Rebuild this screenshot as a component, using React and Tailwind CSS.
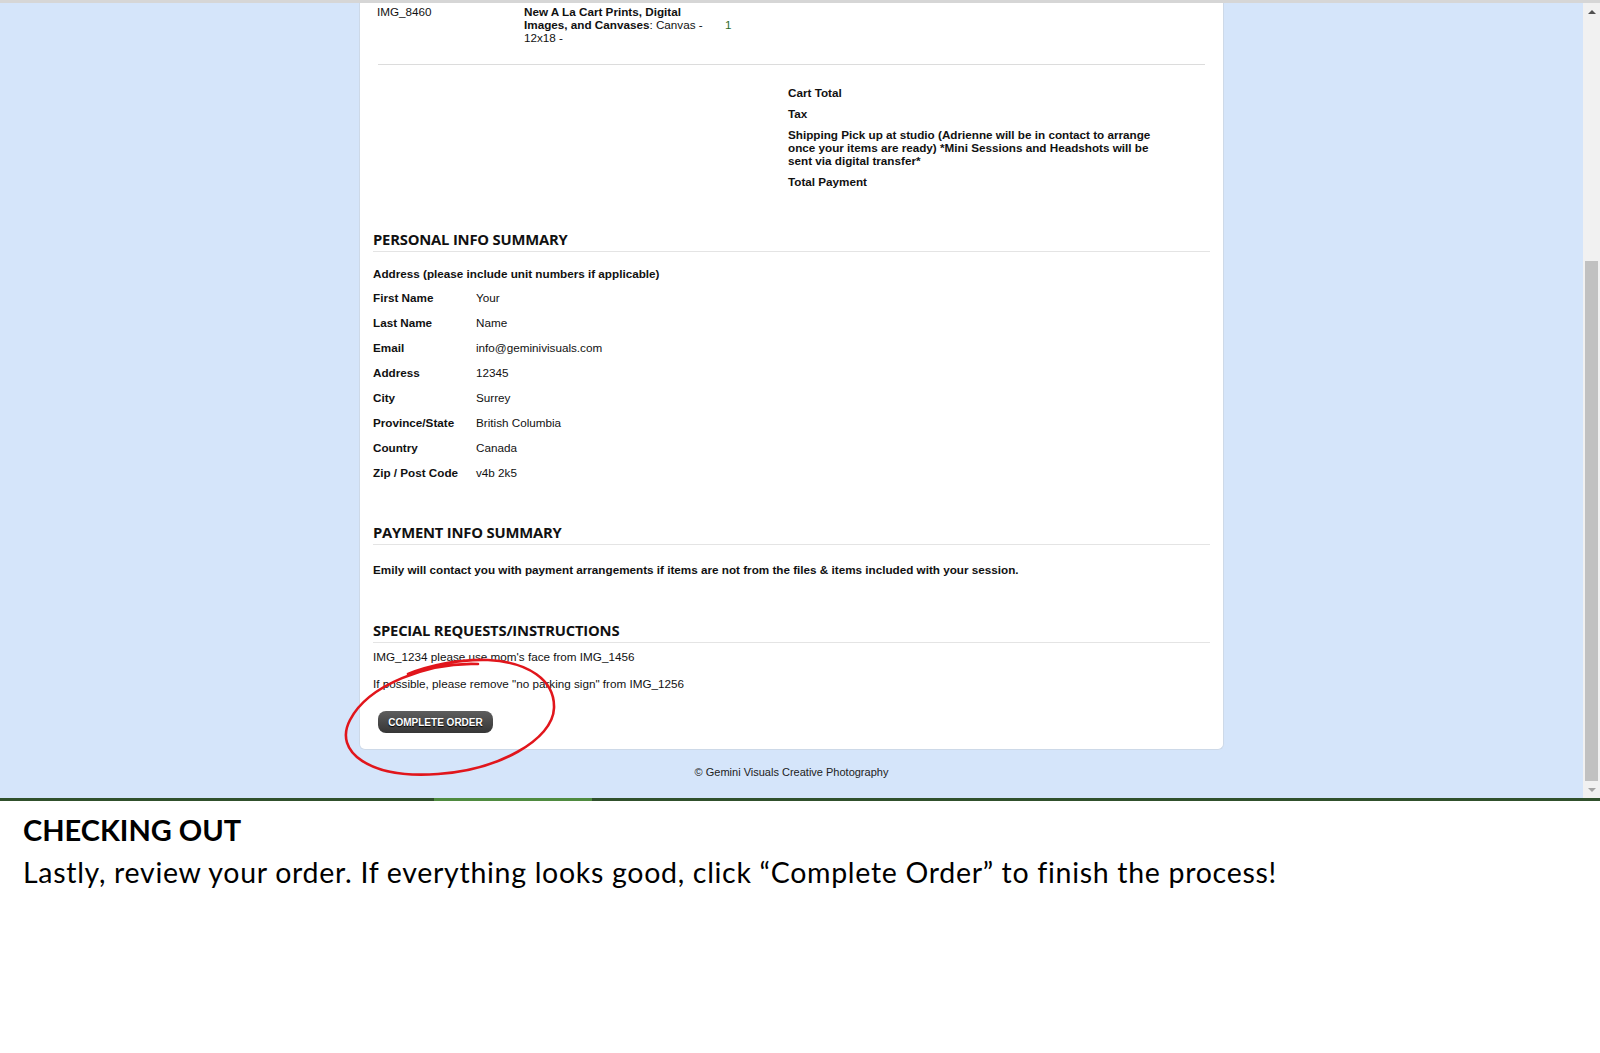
import React from 'react'

const info = [
    ['First Name', 'Your'],
    ['Last Name', 'Name'],
    ['Email', 'info@geminivisuals.com'],
    ['Address', '12345'],
    ['City', 'Surrey'],
    ['Province/State', 'British Columbia'],
    ['Country', 'Canada'],
    ['Zip / Post Code', 'v4b 2k5'],
]

const SectionTitle = ({ children }) => (
    <div className="border-b border-[#e4e4e4] pb-[3px] text-[14.8px] font-bold leading-[18px] tracking-[-0.2px] text-[#111]" style={{ fontFamily: '"Open Sans", sans-serif' }}>
        {children}
    </div>
)

const Scrollbar = () => (
    <div className="flex w-[17px] flex-col bg-[#f1f1f1]">
        <div className="flex h-[17px] items-center justify-center">
            <div className="h-0 w-0 border-x-[4px] border-b-[4px] border-x-transparent border-b-[#505050]" />
        </div>
        <div className="h-[241px]" />
        <div className="mx-[2px] flex-1 bg-[#c1c1c1]" />
        <div className="flex h-[17px] items-center justify-center">
            <div className="h-0 w-0 border-x-[4px] border-t-[4px] border-x-transparent border-t-[#a3a3a3]" />
        </div>
    </div>
)

export default function App() {
    return (
        <div className="h-[1053px] w-[1600px] overflow-hidden bg-white">
            {/* browser viewport */}
            <div className="relative flex h-[798px] border-t-[3px] border-[#d6d6d6]">
                <div className="flex-1 bg-[#d5e5fa]" style={{ fontFamily: '"Liberation Sans", Arial, sans-serif' }}>
                    <div className="mx-auto w-[865px] rounded-b-[6px] border-x border-b border-[#cdd9e8] bg-white px-[13px] pb-[16px] text-[11.7px] text-[#111]">
                        {/* order row */}
                        <div className="flex px-[4px] pt-[2px] leading-[13px]">
                            <div className="w-[147px]">IMG_8460</div>
                            <div className="w-[190px]">
                                <b>New A La Cart Prints, Digital Images, and Canvases</b>: Canvas - 12x18 -
                            </div>
                            <div className="pl-[11px] pt-[13px] text-[#2f6b2a]">1</div>
                        </div>
                        <div className="mx-[5px] mt-[20px] border-t border-[#dcdcdc]" />

                        {/* totals */}
                        <div className="ml-[415px] mt-[21px] w-[372px] font-bold leading-[13px]">
                            <div>Cart Total</div>
                            <div className="mt-[8px]">Tax</div>
                            <div className="mt-[8px]">Shipping Pick up at studio (Adrienne will be in contact to arrange once your items are ready) *Mini Sessions and Headshots will be sent via digital transfer*</div>
                            <div className="mt-[8px]">Total Payment</div>
                        </div>

                        {/* personal info */}
                        <div className="mt-[42px]">
                            <SectionTitle>PERSONAL INFO SUMMARY</SectionTitle>
                            <div className="mt-[15px] font-bold leading-[13px]">Address (please include unit numbers if applicable)</div>
                            <div className="mt-[11px] flex flex-col gap-[12px] leading-[13px]">
                                {info.map(([k, v]) => (
                                    <div key={k} className="flex">
                                        <div className="w-[103px] font-bold">{k}</div>
                                        <div>{v}</div>
                                    </div>
                                ))}
                            </div>
                        </div>

                        {/* payment info */}
                        <div className="mt-[44px]">
                            <SectionTitle>PAYMENT INFO SUMMARY</SectionTitle>
                            <div className="mt-[18px] font-bold leading-[13px]">
                                Emily will contact you with payment arrangements if items are not from the files &amp; items included with your session.
                            </div>
                        </div>

                        {/* special requests */}
                        <div className="mt-[45px]">
                            <SectionTitle>SPECIAL REQUESTS/INSTRUCTIONS</SectionTitle>
                            <div className="mt-[7px] leading-[13px]">IMG_1234 please use mom's face from IMG_1456</div>
                            <div className="mt-[14px] leading-[13px]">If possible, please remove "no parking sign" from IMG_1256</div>
                            <button className="ml-[5px] mt-[21px] flex h-[22px] w-[115px] items-center justify-center rounded-[8px] bg-gradient-to-b from-[#5e5e5e] to-[#363636] text-[10px] font-bold text-white [text-shadow:0_1px_1px_#000]">
                                COMPLETE ORDER
                            </button>
                        </div>
                    </div>
                    <div className="mt-[14px] text-center text-[11px] text-[#222]">© Gemini Visuals Creative Photography</div>
                </div>
                <Scrollbar />

                {/* hand-drawn red circle */}
                <svg className="pointer-events-none absolute left-[328px] top-[637px]" width="240" height="150" viewBox="0 0 240 150">
                    <path
                        d="M150 24 C100 22 40 45 22 80 C5 112 42 139 110 134 C170 130 225 100 226 68 C227 40 200 22 160 20 C130 19 100 26 80 34"
                        fill="none"
                        stroke="#e1161c"
                        strokeWidth="2.6"
                        strokeLinecap="round"
                    />
                </svg>
            </div>

            {/* video progress line */}
            <div className="flex h-[3px] bg-[#30502c]">
                <div className="w-[434px]" />
                <div className="w-[158px] bg-[#4e8a3f]" />
            </div>

            {/* caption */}
            <div className="px-[23px] pt-[11px] text-black" style={{ fontFamily: 'Lato, sans-serif' }}>
                <div className="text-[29px] font-bold leading-[36px]">CHECKING OUT</div>
                <div className="mt-[7px] text-[28.5px] leading-[34px] tracking-[0.7px]">
                    Lastly, review your order. If everything looks good, click “Complete Order” to finish the process!
                </div>
            </div>
        </div>
    )
}
